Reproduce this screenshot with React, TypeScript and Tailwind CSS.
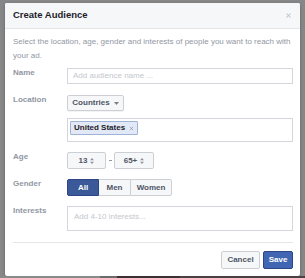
import { X } from "lucide-react";

const font = { fontFamily: '"Liberation Sans", Arial, sans-serif' };

function Label({ children }: { children: React.ReactNode }) {
	return (
		<div className="w-[54px] shrink-0 text-[8px] leading-[10px] font-bold text-[#9197a3]">
			{children}
		</div>
	);
}

function UpDown() {
	return (
		<svg width="4" height="6" viewBox="0 0 4 6" className="ml-[3px]">
			<path d="M2 0 L4 2.2 H0 Z M2 6 L4 3.8 H0 Z" fill="#90949c" />
		</svg>
	);
}

export default function App() {
	return (
		<div
			className="flex h-[278px] w-[305px] flex-col overflow-hidden bg-[#878787]"
			style={font}
		>
			<div className="ml-[5px] mt-[3px] flex h-[273px] w-[295px] flex-col rounded-[2px] bg-white shadow-[0_1px_3px_rgba(0,0,0,0.3)]">
				<div className="flex h-[26px] items-center justify-between rounded-t-[2px] border-b border-[#e5e5e5] bg-[#f6f7f9] pl-[8px] pr-[8px]">
					<span className="text-[9.5px] font-bold text-[#1d2129]">Create Audience</span>
					<X size={7} strokeWidth={3.5} color="#bec3c9" />
				</div>

				<div className="flex flex-col pl-[8px] pr-[7px] pt-[6px]">
					<p className="text-[8px] leading-[14px] text-[#9197a3]">
						Select the location, age, gender and interests of people you want to reach with your ad.
					</p>

					<div className="mt-[5px] flex">
						<Label>Name</Label>
						<div className="flex h-[16px] flex-1 items-center border border-[#d3d6db] px-[5px] text-[8px] text-[#c4c7cc]">
							Add audience name ...
						</div>
					</div>

					<div className="mt-[11px] flex">
						<Label>Location</Label>
						<div className="flex h-[16px] w-[57px] items-center justify-center gap-[4px] rounded-[2px] border border-[#ccd0d5] bg-[#f6f7f9] text-[8px] font-bold text-[#4e5665] shadow-[0_1px_1px_rgba(0,0,0,0.05)]">
							Countries
							<svg width="5" height="3" viewBox="0 0 5 3">
								<path d="M0 0 H5 L2.5 3 Z" fill="#7f7f7f" />
							</svg>
						</div>
					</div>

					<div className="ml-[54px] mt-[7px] flex h-[24px] items-start border border-[#d3d6db] px-[2px] pt-[2px]">
						<div className="flex h-[14px] items-center gap-[4px] rounded-[1px] border border-[#9cb4d8] bg-[#e2e8f6] px-[3px] text-[8px] font-bold text-[#1d2129]">
							United States
							<X size={5} strokeWidth={3.5} color="#90949c" />
						</div>
					</div>

					<div className="mt-[10px] flex items-start">
						<Label>Age</Label>
						<div className="flex h-[17px] w-[39px] items-center justify-center rounded-[2px] border border-[#ccd0d5] bg-[#f6f7f9] text-[8px] font-bold text-[#4e5665]">
							13
							<UpDown />
						</div>
						<div className="flex h-[17px] w-[8px] items-center justify-center">
							<div className="h-px w-[3px] bg-[#9197a3]" />
						</div>
						<div className="flex h-[17px] w-[40px] items-center justify-center rounded-[2px] border border-[#ccd0d5] bg-[#f6f7f9] text-[8px] font-bold text-[#4e5665]">
							65+
							<UpDown />
						</div>
					</div>

					<div className="mt-[10px] flex">
						<Label>Gender</Label>
						<div className="flex h-[17px] text-[8px] font-bold">
							<div className="flex w-[32px] items-center justify-center rounded-l-[2px] border border-[#2d4486] bg-[#3b5998] text-white">
								All
							</div>
							<div className="flex w-[31px] items-center justify-center border-y border-[#ccd0d5] bg-[#f6f7f9] text-[#4e5665]">
								Men
							</div>
							<div className="flex w-[42px] items-center justify-center rounded-r-[2px] border border-[#ccd0d5] bg-[#f6f7f9] text-[#4e5665]">
								Women
							</div>
						</div>
					</div>

					<div className="mt-[10px] flex">
						<Label>Interests</Label>
						<div className="flex h-[25px] flex-1 items-start border border-[#d3d6db] px-[6px] pt-[5px] text-[8px] leading-[10px] text-[#c4c7cc]">
							Add 4-10 interests...
						</div>
					</div>

					<div className="mt-[11px] h-px bg-[#e5e5e5]" />

					<div className="mt-[8px] flex justify-end gap-[3px]">
						<div className="flex h-[18px] w-[39px] items-center justify-center rounded-[2px] border border-[#ccd0d5] bg-[#f6f7f9] text-[8px] font-bold text-[#4e5665]">
							Cancel
						</div>
						<div className="flex h-[18px] w-[30px] items-center justify-center rounded-[2px] border border-[#2d4486] bg-[#4267b2] text-[8px] font-bold text-white">
							Save
						</div>
					</div>
				</div>
			</div>
			<div className="mt-auto flex h-[2px]">
				<div className="w-[100px] bg-[#8a8a8a]" />
				<div className="w-[17px] bg-[#6b6b6b]" />
				<div className="w-[63px] bg-[#3c3037]" />
				<div className="flex-1 bg-[#4a4046]" />
			</div>
		</div>
	);
}
